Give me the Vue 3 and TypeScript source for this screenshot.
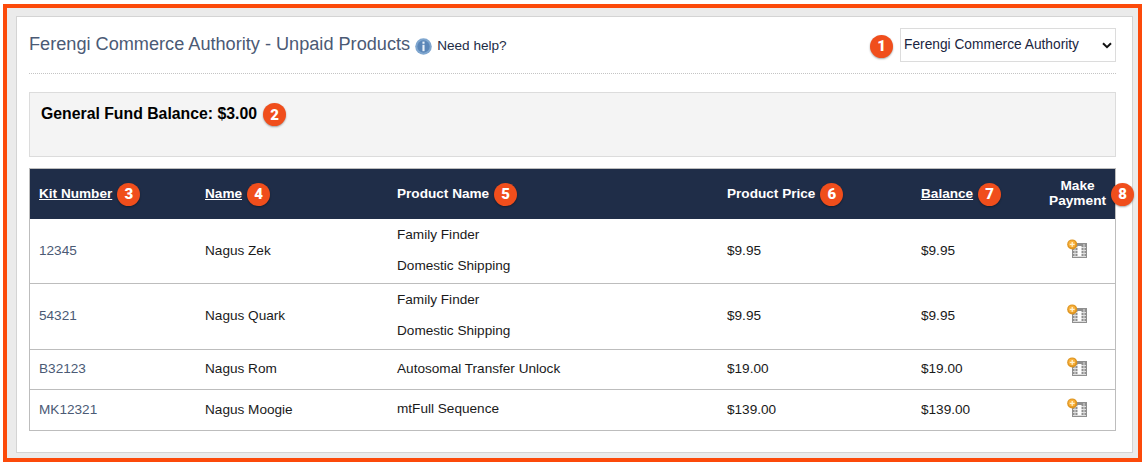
<script setup lang="ts">
interface Row { kit: string; name: string; products: string[]; price: string; balance: string }
const rows: Row[] = [
  { kit: '12345', name: 'Nagus Zek', products: ['Family Finder', 'Domestic Shipping'], price: '$9.95', balance: '$9.95' },
  { kit: '54321', name: 'Nagus Quark', products: ['Family Finder', 'Domestic Shipping'], price: '$9.95', balance: '$9.95' },
  { kit: 'B32123', name: 'Nagus Rom', products: ['Autosomal Transfer Unlock'], price: '$19.00', balance: '$19.00' },
  { kit: 'MK12321', name: 'Nagus Moogie', products: ['mtFull Sequence'], price: '$139.00', balance: '$139.00' },
]
</script>

<template>
  <div class="page">
    <div class="frame">
      <div class="panel">
        <header class="head">
          <h1 class="title">Ferengi Commerce Authority - Unpaid Products</h1>
          <svg class="info" viewBox="0 0 16 16" width="17" height="17">
            <circle cx="8" cy="8" r="7.8" fill="#7fa6cf" />
            <circle cx="8" cy="8" r="5.8" fill="#5b86b8" />
            <rect x="7" y="3.4" width="2" height="2" fill="#e8f0f8" />
            <rect x="7" y="6.4" width="2" height="6" fill="#e8f0f8" />
          </svg>
          <span class="help">Need help?</span>
          <span class="spacer"></span>
          <span class="badge one">1</span>
          <div class="select">
            <span>Ferengi Commerce Authority</span>
            <svg viewBox="0 0 10 7" width="10" height="7"><path d="M1 1.2l4 4 4-4" fill="none" stroke="#111" stroke-width="2" /></svg>
          </div>
        </header>
        <div class="fund">
          <strong>General Fund Balance: $3.00</strong>
          <span class="badge">2</span>
        </div>
        <div class="table">
          <div class="row hdr">
            <div class="c1"><a class="lbl">Kit Number</a><span class="badge">3</span></div>
            <div class="c2"><a class="lbl">Name</a><span class="badge">4</span></div>
            <div class="c3"><span class="lbl">Product Name</span><span class="badge">5</span></div>
            <div class="c4"><span class="lbl">Product Price</span><span class="badge">6</span></div>
            <div class="c5"><a class="lbl">Balance</a><span class="badge">7</span></div>
            <div class="c6"><span class="lbl pay">Make<br />Payment</span><span class="badge">8</span></div>
          </div>
          <div v-for="r in rows" :key="r.kit" class="row body" :class="{ tall: r.products.length > 1 }">
            <div class="c1 kit">{{ r.kit }}</div>
            <div class="c2">{{ r.name }}</div>
            <div class="c3 prods"><span v-for="p in r.products" :key="p">{{ p }}</span></div>
            <div class="c4">{{ r.price }}</div>
            <div class="c5">{{ r.balance }}</div>
            <div class="c6 icon">
              <svg viewBox="0 0 20 20" width="20" height="20">
                <rect x="5" y="4" width="15" height="15" fill="#8f8f8f" />
                <path d="M6 8.5h13M6 11.5h13M6 14.5h13M6 17.5h13M8 5v13M17 5v13" stroke="#dedede" stroke-width="1" />
                <rect x="10.5" y="7" width="4" height="10" fill="#fff" />
                <circle cx="5.2" cy="5.4" r="5" fill="#dd9420" />
                <circle cx="5" cy="5" r="3.6" fill="#f9b13c" />
                <path d="M2.8 5.4h4.8M5.2 3v4.8" stroke="#fff2d0" stroke-width="1.3" />
              </svg>
            </div>
          </div>
        </div>
      </div>
    </div>
  </div>
</template>

<style>
html, body { margin: 0; background: #fff; }
</style>

<style scoped>
.page {
  width: 1142px;
  height: 467px;
  box-sizing: border-box;
  padding: 4px 0 5px 3px;
  font-family: "Liberation Sans", Arial, sans-serif;
  background: #fff;
}
.frame {
  height: 100%;
  box-sizing: border-box;
  border: 4px solid #fc4a0a;
  background: #ebebeb;
  padding: 8px 5px 5px 9px;
}
.panel {
  height: 100%;
  box-sizing: border-box;
  background: #fff;
  border: 1px solid #d4d4d4;
  padding: 0 16px 0 12px;
}
.head {
  display: flex;
  align-items: center;
  height: 57px;
  box-sizing: border-box;
  border-bottom: 1px dotted #c4c4c4;
}
.title {
  margin: -3px 0 0 0;
  font-size: 18.15px;
  font-weight: 400;
  color: #4b5a75;
  line-height: 24px;
}
.info { margin-left: 5px; margin-top: 2px; }
.help { margin-left: 5px; font-size: 13.6px; color: #1e2c46; }
.spacer { flex: 1; }
.select {
  width: 216px;
  height: 34px;
  box-sizing: border-box;
  border: 1px solid #dcdcdc;
  display: flex;
  align-items: center;
  justify-content: space-between;
  padding: 0 1px 0 3px;
  margin-bottom: 1px;
  font-size: 13.75px;
  color: #1a2540;
}
.select svg { margin-right: 2px; margin-top: 2px; }
.badge {
  display: inline-flex;
  align-items: center;
  justify-content: center;
  width: 23px;
  height: 23px;
  border-radius: 50%;
  background: #f04e1c;
  color: #fff;
  font-family: Roboto, sans-serif;
  font-size: 15px;
  font-weight: 900;
  box-shadow: 0 1px 2px rgba(0, 0, 0, .35);
  margin-left: 6px;
  flex: none;
}
.one { margin: 2px 7px 0 0; }
.fund {
  margin-top: 18px;
  height: 65px;
  box-sizing: border-box;
  border: 1px solid #dcdcdc;
  background: #f4f4f4;
  padding: 10px 11px;
  display: flex;
  align-items: flex-start;
  font-size: 15.8px;
  color: #000;
  line-height: 22px;
}
.table {
  margin-top: 11px;
  width: 1087px;
  box-sizing: border-box;
  border: 1px solid #bdbdbd;
  font-size: 13.6px;
  color: #1a1a1a;
}
.row {
  display: grid;
  grid-template-columns: 166px 192px 330px 194px 128px minmax(0, 1fr);
  align-items: center;
  padding-left: 9px;
  box-sizing: border-box;
}
.row > div { display: flex; align-items: center; }
.hdr {
  height: 50px;
  background: #1f2d48;
  color: #fff;
  font-size: 13.6px;
  font-weight: 700;
}
.hdr a { text-decoration: underline; }
.hdr .badge { margin-left: 5px; }
.lbl { margin-top: -2px; }
.pay { text-align: center; line-height: 15px; font-size: 13.7px; width: 57px; flex: none; }
.body { border-bottom: 1px solid #bdbdbd; height: 40px; padding-bottom: 2px; }
.body:last-child { border-bottom: 0; }
.tall { height: 65px; }
.tall:nth-child(3) { height: 66px; }
.kit { color: #4b5a75; }
.prods { flex-direction: column; align-items: flex-start !important; gap: 13px; line-height: 18px; }
.icon svg { margin-left: 18px; margin-top: -3px; }
</style>
